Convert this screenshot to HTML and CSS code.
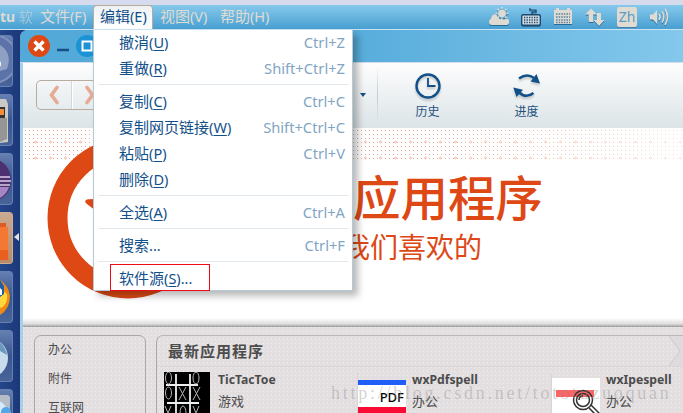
FILE: index.html
```
<!DOCTYPE html>
<html lang="zh-CN">
<head>
    <meta charset="UTF-8" />
    <title>Ubuntu 软件中心</title>
    <link rel="stylesheet" href="styles.css">
</head>
<body>
    <div class="top-strip"></div>

    <header class="menubar">
        <span class="app-title">tu <span class="fade">软</span></span>
        <nav class="menus">
            <span class="menu-label">文件<i>(F)</i></span>
            <span class="menu-label active">编辑<i>(E)</i></span>
            <span class="menu-label">视图<i>(V)</i></span>
            <span class="menu-label">帮助<i>(H)</i></span>
        </nav>
        <div class="indicators">
            <svg width="20" height="20" viewBox="0 0 20 20">
                <g stroke="#dfdbd2" stroke-width="1.6"><path d="M13 0v13M6.500 6.500h13M8.400 1.900l9.200 9.200M17.600 1.900l-9.200 9.200" /></g>
                <circle cx="13" cy="6.500" r="4.300" stroke="#6fb0d6" stroke-width="1" />
                <path d="M3 18a3 3 0 0 1-3-3c0-2 1-3 2-3 0-4 4-6 6-4 0 2 1 3 3 4 2 1 4 1 6 0l1-.500c3 1 3 6 0 6.500z" />
            </svg>
            <svg width="20" height="20" viewBox="0 0 20 20">
                <path d="M11 7V5H15V3H9V1" fill="none" stroke="#234c6e" stroke-width="1.200" />
                <rect x="0.700" y="7.700" width="18.600" height="10.600" rx="1.500" fill="#d3dade" stroke="#1d4a70" stroke-width="1.400" />
                <path d="M3 10.500h14M3 13h14M3 15.500h14" stroke="#1d4a70" stroke-width="1.300" stroke-dasharray="1.300 1.200" />
            </svg>
            <svg width="20" height="20" viewBox="0 0 20 20">
                <path d="M1 3h2V1h3v2h8V1h3v2h2v14H1z" />
                <path d="M3 7h14M3 10h14M3 13h14M3 15.500h14" stroke="#5e86a3" stroke-width="1.600" stroke-dasharray="1.600 1" />
            </svg>
            <svg width="20" height="20" viewBox="0 0 20 20">
                <path d="M6 1.500l6 6H8.300V15H3.700V7.500H0z" />
                <path d="M12 6h4v7h3.500L14 19l-5.500-6H12z" />
            </svg>
            <span class="ime">Zh</span>
            <svg width="20" height="20" viewBox="0 0 20 20">
                <path d="M1 7.500h3l4-4.500v14l-4-4.500H1z" />
                <g fill="none" stroke="#dfdbd2" stroke-width="1.700"><path d="M10 7q2 3 0 6M13 4.500q3.500 5.500 0 11M16 2q5 8 0 16" /></g>
            </svg>
        </div>
    </header>

    <div class="desktop">
        <aside class="launcher">
            <div class="tile">
                <svg width="13" height="52"><circle cx="-7" cy="23" r="25" fill="#8093be" /><circle cx="-7" cy="23" r="23" fill="#5b73a9" /><path d="M0 9q13 8 7 24L0 35z" fill="#8fa0c5" /><circle cx="-4" cy="28" r="5" fill="#fff" /></svg>
            </div>
            <div class="tile">
                <svg width="13" height="52"><path d="M0 4h6l2 5v38l-8 1z" fill="#c9c9c6" /><path d="M0 12h5v12H0z" fill="#333" /><path d="M0 14h4v6H0z" fill="#f58d3c" /><path d="M0 23h7v21l-7 3z" fill="#969696" /></svg>
            </div>
            <div class="tile">
                <svg width="13" height="52"><ellipse cx="-7" cy="26" rx="18" ry="21" fill="#4d306f" /><path d="M0 23h10M0 27h11M0 31h10" stroke="#dccbe9" stroke-width="1.500" /><path d="M0 33h9q-2 7-9 11z" fill="#a585c5" /></svg>
            </div>
            <div class="tile current">
                <svg width="13" height="52"><path d="M0 10h6v5H0z" fill="#dd5b22" /><path d="M0 14h8v33H0z" fill="#f47733" /><path d="M0 37h8v10H0z" fill="#e85f1f" /></svg>
            </div>
            <div class="tile">
                <svg width="13" height="52"><path d="M0 8q9 6 10 16 0 13-10 19z" fill="#f08a14" /><path d="M0 20q9-2 7 8-2 7-7 8z" fill="#ffd63b" /><path d="M0 8l4 6v8l-4 3z" fill="#205ea8" /><path d="M0 16l2 2v5H0z" fill="#fff" /></svg>
            </div>
            <div class="tile">
                <svg width="13" height="52"><circle cx="-12" cy="27" r="20" fill="#c8dcec" /><path d="M0 11q6 6 7 13l-7-4z" fill="#6a99bd" /></svg>
            </div>
            <div class="tile">
                <svg width="13" height="52"><path d="M0 5h8l2 2v40H0z" fill="#b4bcc5" /><circle cx="-7" cy="26" r="16" fill="#d5eafa" /><circle cx="6" cy="22" r="5" fill="#55a6e5" /></svg>
            </div>
            <div class="pip"></div>
        </aside>

        <main class="window">
            <div class="titlebar">
                <svg width="80" height="24" viewBox="0 0 80 24">
                    <circle cx="11" cy="12" r="11" fill="#dd4814" />
                    <path d="M6.500 7.500l9 9M15.500 7.500l-9 9" stroke="#fff" stroke-width="3.400" />
                    <path d="M29 16h12" stroke="#174f86" stroke-width="2.500" />
                    <circle cx="59" cy="12" r="11" fill="#1b93d5" />
                    <rect x="54.500" y="7.500" width="9" height="9" fill="none" stroke="#fff" stroke-width="2" />
                </svg>
            </div>

            <div class="content">
                <div class="toolbar">
                    <div class="nav-buttons">
                        <div class="nav-btn"><svg width="12" height="20" viewBox="0 0 12 20"><path d="M9 2.500L3.500 10 9 17.500" /></svg></div>
                        <div class="nav-btn"><svg width="12" height="20" viewBox="0 0 12 20"><path d="M3 2.500L8.500 10 3 17.500" /></svg></div>
                    </div>
                    <div class="caret"></div>
                    <div class="tool history">
                        <svg width="28" height="28" viewBox="0 0 28 28">
                            <circle cx="14" cy="14" r="11.500" fill="none" stroke="#12508a" stroke-width="2.400" />
                            <path d="M14 6v8h7.500" fill="none" stroke="#12508a" stroke-width="1.800" />
                        </svg>
                        <span>历史</span>
                    </div>
                    <div class="tool progress">
                        <svg width="28" height="28" viewBox="0 0 28 28">
                            <path d="M6 6.500Q14 .800 21 6M20.500 21Q13 27 5.500 20" fill="none" stroke="#12508a" stroke-width="2.600" />
                            <path d="M23.500 2l3.500 9.500-9.500-2zM.300 15.500l9.700 2.300-6.500 7.200z" fill="#12508a" />
                        </svg>
                        <span>进度</span>
                    </div>
                </div>

                <section class="banner">
                    <div class="dots"></div>
                    <svg class="ring" width="170" height="170" viewBox="0 0 170 170">
                        <circle cx="85" cy="85" r="70.500" fill="none" stroke="#dd4814" stroke-width="20" />
                        <path d="M43 67q1-1 9-1v11q-3-2-8-6-3-2-1-4z" fill="#dd4814" />
                    </svg>
                    <div class="banner-text">
                        <h1>应用程序</h1>
                        <p>我们喜欢的</p>
                    </div>
                </section>

                <section class="store">
                    <ul class="categories">
                        <li>办公</li>
                        <li>附件</li>
                        <li>互联网</li>
                    </ul>
                    <div class="newest">
                        <h2>最新应用程序
                            <svg width="17" height="30" viewBox="0 0 17 30"><path d="M3 0h14v30H3l11-15z" fill="#dfdade" /><path d="M3 0l11 15L3 30" fill="none" stroke="#cfcacc" /></svg>
                        </h2>
                        <div class="apps">
                            <div class="app">
                                <svg width="48" height="48" viewBox="0 0 48 48">
                                    <path d="M0 0h46v48H0z" fill="#000" />
                                    <g stroke="#eee" stroke-width="1.800"><path d="M2 13h32M3 31h32M12 2v46M26 2v46" /></g>
                                    <g fill="none" stroke="#b5b5b5" stroke-width="1"><ellipse cx="4.500" cy="6" rx="3" ry="6" /><ellipse cx="32" cy="6" rx="3" ry="6" /><ellipse cx="4.500" cy="21" rx="3" ry="6" /><path d="M15 15l7 13M22 15l-7 13M29 15l7 13M36 15l-7 13M1 34l6 14M7 34L1 48M29 34l6 14M35 34l-6 14" /><ellipse cx="19" cy="41" rx="3" ry="7" /></g>
                                </svg>
                                <div class="info"><b>TicTacToe</b><span>游戏</span></div>
                            </div>
                            <div class="app">
                                <div class="pdf">PDF</div>
                                <div class="info"><b>wxPdfspell</b><span>办公</span></div>
                            </div>
                            <div class="app">
                                <svg width="48" height="48" viewBox="0 0 48 48">
                                    <path d="M0 6h48v42H0z" fill="#fff" /><path d="M4 18h38v7H4z" fill="#ff6464" />
                                    <g fill="none" stroke="#333" stroke-width="1.500"><circle cx="31" cy="28" r="9.500" /><circle cx="31" cy="28" r="6.500" /><path d="M37 36l10 10M39 33l9 9M27 28q0-4 4-4" /></g>
                                </svg>
                                <div class="info"><b>wxIpespell</b><span>办公</span></div>
                            </div>
                        </div>
                    </div>
                </section>
            </div>
        </main>
    </div>

    <div class="dropdown">
        <div class="item"><span>撤消<i>(<u>U</u>)</i></span><kbd>Ctrl+Z</kbd></div>
        <div class="item"><span>重做<i>(<u>R</u>)</i></span><kbd>Shift+Ctrl+Z</kbd></div>
        <hr>
        <div class="item"><span>复制<i>(<u>C</u>)</i></span><kbd>Ctrl+C</kbd></div>
        <div class="item"><span>复制网页链接<i>(<u>W</u>)</i></span><kbd>Shift+Ctrl+C</kbd></div>
        <div class="item"><span>粘贴<i>(<u>P</u>)</i></span><kbd>Ctrl+V</kbd></div>
        <div class="item"><span>删除<i>(<u>D</u>)</i></span></div>
        <hr>
        <div class="item"><span>全选<i>(<u>A</u>)</i></span><kbd>Ctrl+A</kbd></div>
        <hr>
        <div class="item"><span>搜索<i>...</i></span><kbd>Ctrl+F</kbd></div>
        <hr>
        <div class="item"><span>软件源<i>(<u>S</u>)...</i></span></div>
        <div class="marker"></div>
    </div>

    <div class="watermark">http://blog.csdn.net/tototuzuoquan</div>
</body>
</html>
```
FILE: styles.css
```
:root {
    --blue: #12508a;
    --orange: #dd4814;
    --icon: #dfdbd2;
    --navy: #1e3c7e;
}

* {
    margin: 0;
    padding: 0;
    box-sizing: border-box;
}

body {
    position: relative;
    display: flex;
    flex-direction: column;
    width: 683px;
    height: 413px;
    overflow: hidden;
    font-family: "Noto Sans", "Noto Sans CJK SC", sans-serif;
    font-size: 15px;
    background: #fff;
}

i {
    font-style: normal;
    font-size: 14.5px;
}

svg {
    display: block;
    flex: none;
}

.top-strip {
    flex: none;
    height: 5px;
    background: #d5daec;
}

/* menu bar */
.menubar {
    flex: none;
    display: flex;
    height: 25px;
    line-height: 23px;
    color: var(--icon);
    background: linear-gradient(#86c9ec, #489fd1);
    border-bottom: 1px solid #cbe4f4;
    white-space: nowrap;
}

.app-title {
    width: 33px;
    font-weight: bold;
    font-size: 14px;
}

.app-title .fade {
    font-weight: normal;
    opacity: 0.5;
}

.menus {
    display: flex;
}

.menu-label {
    width: 60px;
    padding-left: 7px;
}

.menu-label.active {
    color: var(--blue);
    background: linear-gradient(#eef1f3, #fff);
    border: 1px solid #b9ab9c;
    border-bottom: 0;
    border-radius: 4px 4px 0 0;
    padding-left: 6px;
    line-height: 21px;
}

.indicators {
    display: flex;
    gap: 12px;
    margin-left: auto;
    padding: 2px 14px 0 0;
}

.indicators svg {
    fill: var(--icon);
    filter: drop-shadow(0 1px 0 #2c6a96);
}

.ime {
    width: 20px;
    height: 20px;
    border-radius: 2px;
    background: var(--icon);
    box-shadow: 0 1px 0 #4580a8;
    color: #5b9cc5;
    font-size: 14px;
    line-height: 20px;
    text-align: center;
}

.desktop {
    flex: 1;
    display: flex;
    min-height: 0;
    background: var(--navy);
}

/* launcher */
.launcher {
    position: relative;
    width: 20px;
    display: flex;
    flex-direction: column;
    gap: 7px;
    padding-top: 5px;
    background: linear-gradient(90deg, #24468a, #1c3878);
    overflow: hidden;
}

.tile {
    flex: none;
    width: 13px;
    height: 52px;
    border-radius: 0 4px 4px 0;
    border: 1px solid #6780b2;
    border-left: 0;
    background: linear-gradient(#667fb2, #38568f 50%, #496499);
    overflow: hidden;
}

.tile.current {
    background: linear-gradient(#c9aa92, #b98a67);
    border-color: #cfae93;
}

.pip {
    position: absolute;
    right: 1px;
    top: 203px;
    border: 4px solid transparent;
    border-left: 0;
    border-right: 5px solid #e3e3e3;
}

/* window */
.window {
    flex: 1;
    display: flex;
    flex-direction: column;
    min-width: 0;
    border-radius: 8px 0 0 0;
    overflow: hidden;
    background: #a9cfe8;
}

.titlebar {
    flex: none;
    height: 33px;
    padding: 4px 0 0 8px;
    background: linear-gradient(90deg, #53aad9, #53aad9 45%, #84c8ec);
    border-bottom: 1px solid #d3dce9;
}

.content {
    flex: 1;
    display: flex;
    flex-direction: column;
    min-height: 0;
    margin-left: 3px;
    background: #fff;
}

.toolbar {
    flex: none;
    display: flex;
    height: 65px;
    padding-left: 13px;
    background: linear-gradient(#fdfdfd, #dce4e7);
}

.nav-buttons {
    display: flex;
    width: 72px;
    height: 30px;
    margin-top: 17px;
    border: 1px solid #b8ab9f;
    border-radius: 5px;
}

.nav-btn {
    flex: 1;
    display: flex;
    align-items: center;
    justify-content: center;
}

.nav-btn + .nav-btn {
    border-left: 1px solid #fff;
    box-shadow: -1px 0 0 #d1d7da;
}

.nav-btn path {
    fill: none;
    stroke: #e5ac93;
    stroke-width: 3.6;
    stroke-linecap: round;
}

.caret {
    width: 18px;
    margin: 5px 0 5px 252px;
    border-right: 1px solid;
    border-image: linear-gradient(transparent, #c3c9cc, transparent) 1;
}

.caret::before {
    content: "";
    display: block;
    width: 0;
    margin-top: 25px;
    border: 3px solid transparent;
    border-top: 4px solid var(--blue);
    border-bottom: 0;
}

.tool {
    display: flex;
    flex-direction: column;
    align-items: center;
    width: 99px;
    padding-top: 9px;
    color: #24527f;
    font-size: 12px;
    line-height: 18px;
}

.tool svg {
    filter: drop-shadow(0 2px 1px rgba(0, 0, 0, 0.2));
}

.tool span {
    margin-top: 3px;
}

/* banner */
.banner {
    position: relative;
    flex: none;
    height: 199px;
    padding: 41px 0 0 319px;
    background: linear-gradient(#fff 190px, #ddd 196px, #999 199px);
    overflow: hidden;
}

.dots {
    position: absolute;
    inset: 0 0 auto 0;
    height: 32px;
    background:
        radial-gradient(circle, #f8cfc2 1.3px, transparent 1.8px) 5px 6px / 15px 16px,
        conic-gradient(from 270deg at 1px 1px, #f0a48f 90deg, transparent 0) 2px 2px / 4px 4px;
    mask-image: linear-gradient(90deg, #000 60%, rgba(0, 0, 0, 0.35));
}

.ring {
    position: absolute;
    left: 20px;
    top: 5px;
}

.banner-text {
    position: relative;
    color: var(--orange);
    white-space: nowrap;
}

.banner h1 {
    padding-left: 11px;
    font-size: 47.5px;
    font-weight: 500;
    font-family: "Noto Sans CJK SC", sans-serif;
    line-height: 54px;
}

.banner p {
    font-size: 28px;
    line-height: 32px;
    margin-top: 8px;
}

/* store */
.store {
    flex: 1;
    display: flex;
    gap: 10px;
    min-height: 0;
    padding: 8px 0 0 11px;
    color: #4c4c4c;
    background: conic-gradient(from 270deg at 1px 1px, #f1eeef 90deg, transparent 0) 0 0 / 4px 4px, #e3dfe1;
}

.categories {
    width: 112px;
    height: 100px;
    padding-left: 13px;
    list-style: none;
    font-size: 12px;
    line-height: 29px;
    border: 1px solid #aaa6a8;
    border-radius: 7px;
}

.categories li {
    position: relative;
    top: -1px;
}

.newest {
    flex: 1;
    height: 100px;
    border: 1px solid #bbb7b9;
    border-left-color: #aaa6a8;
    border-right: 0;
    border-radius: 7px 0 0 0;
}

.newest h2 {
    display: flex;
    justify-content: space-between;
    height: 31px;
    padding-left: 11px;
    font-size: 15px;
    letter-spacing: 1px;
    line-height: 30px;
    border-bottom: 1px solid #d9d5d7;
}

.apps {
    display: grid;
    grid-template-columns: 194px 194px 1fr;
    padding-left: 7px;
}

.app {
    display: flex;
    gap: 6px;
    padding-top: 5px;
}

.app + .app {
    box-shadow: -7px 0 0 -6px #d9d5d7;
}

.info {
    display: flex;
    flex-direction: column;
    font-size: 13px;
    line-height: 21px;
    margin-top: -3px;
}

.info b {
    font-size: 12.2px;
    line-height: 22px;
}

.pdf {
    width: 48px;
    height: 36px;
    margin-top: 8px;
    padding: 3px 2px 0 0;
    border-top: 5px solid #1f5ef7;
    border-bottom: 9px solid #f80c34;
    background: #fff;
    color: #000;
    font-size: 13px;
    font-weight: 500;
    line-height: 19px;
    text-align: right;
}

/* open menu */
.dropdown {
    position: absolute;
    left: 93px;
    top: 30px;
    width: 260px;
    height: 261px;
    color: var(--blue);
    background: #fff;
    border: 1px solid #b4cad8;
    border-top: 0;
    box-shadow: 5px 5px 7px rgba(0, 0, 0, 0.28);
}

.item {
    display: flex;
    justify-content: space-between;
    height: 26px;
    padding: 0 7px 0 25px;
    line-height: 24px;
    white-space: nowrap;
}

.item u {
    text-underline-offset: 2px;
}

.item kbd {
    font-family: inherit;
    font-size: 14.7px;
    color: #82a5c4;
}

.dropdown hr {
    height: 1px;
    margin: 2px 4px 4px;
    border: 0;
    background: #e1e8ed;
}

.marker {
    position: absolute;
    left: 16px;
    top: 234px;
    width: 100px;
    height: 27px;
    border: 1px solid #f00a14;
}

.watermark {
    position: absolute;
    left: 331px;
    top: 383px;
    font-family: "Liberation Serif", serif;
    font-size: 18px;
    letter-spacing: 2.75px;
    line-height: 20px;
    color: rgba(140, 140, 140, 0.4);
    white-space: nowrap;
}
```
